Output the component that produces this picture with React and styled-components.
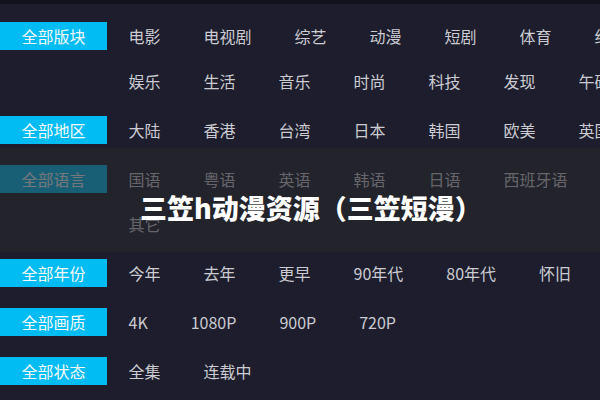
import React from "react";
import styled, { createGlobalStyle } from "styled-components";

const Global = createGlobalStyle`
  html, body {
    margin: 0;
    padding: 0;
    overflow: hidden;
    background: #1d1d2d;
  }
  body {
    font-family: "Noto Sans CJK SC", "Noto Sans", sans-serif;
  }
`;

const Page = styled.div`
  position: relative;
  width: 600px;
  height: 400px;
  overflow: hidden;
  background: #1d1d2d;
`;

const TopStrip = styled.div`
  height: 4px;
  background: #13131d;
`;

const Filters = styled.div`
  width: 720px;
  padding-top: 18px;
  display: flex;
  flex-direction: column;
  gap: 21px;
`;

const Row = styled.div`
  display: flex;
  align-items: flex-start;
`;

const Label = styled.div`
  flex-shrink: 0;
  width: 107px;
  height: 28px;
  line-height: 29px;
  background: #00bcf2;
  color: #f6f9fc;
  font-size: 16px;
  text-align: center;
`;

const List = styled.div`
  width: 560px;
  display: flex;
  flex-wrap: wrap;
  row-gap: 17px;
`;

const Item = styled.span`
  padding: 0 21.5px;
  height: 28px;
  line-height: 29px;
  font-size: 16px;
  color: #cbcbd1;
  white-space: nowrap;
`;

const Overlay = styled.div`
  position: absolute;
  left: 0;
  right: 0;
  top: 148px;
  height: 104px;
  box-sizing: border-box;
  padding: 14px 0 0 140px;
  display: flex;
  align-items: center;
  background: rgba(38, 38, 42, 0.62);
`;

const Title = styled.h1`
  margin: 0;
  font-size: 27px;
  font-weight: 900;
  color: #ffffff;
  letter-spacing: 0;
  white-space: nowrap;
`;

const rows = [
  {
    label: "全部版块",
    items: ["电影", "电视剧", "综艺", "动漫", "短剧", "体育", "纪录片", "娱乐", "生活", "音乐", "时尚", "科技", "发现", "午砖"],
  },
  { label: "全部地区", items: ["大陆", "香港", "台湾", "日本", "韩国", "欧美", "英国"] },
  { label: "全部语言", items: ["国语", "粤语", "英语", "韩语", "日语", "西班牙语", "法语", "其它"] },
  { label: "全部年份", items: ["今年", "去年", "更早", "90年代", "80年代", "怀旧"] },
  { label: "全部画质", items: ["4K", "1080P", "900P", "720P"] },
  { label: "全部状态", items: ["全集", "连载中"] },
];

export default function App() {
  return (
    <Page>
      <Global />
      <TopStrip />
      <Filters>
        {rows.map((r) => (
          <Row key={r.label}>
            <Label>{r.label}</Label>
            <List>
              {r.items.map((it) => (
                <Item key={it}>{it}</Item>
              ))}
            </List>
          </Row>
        ))}
      </Filters>
      <Overlay>
        <Title>三笠h动漫资源（三笠短漫）</Title>
      </Overlay>
    </Page>
  );
}
